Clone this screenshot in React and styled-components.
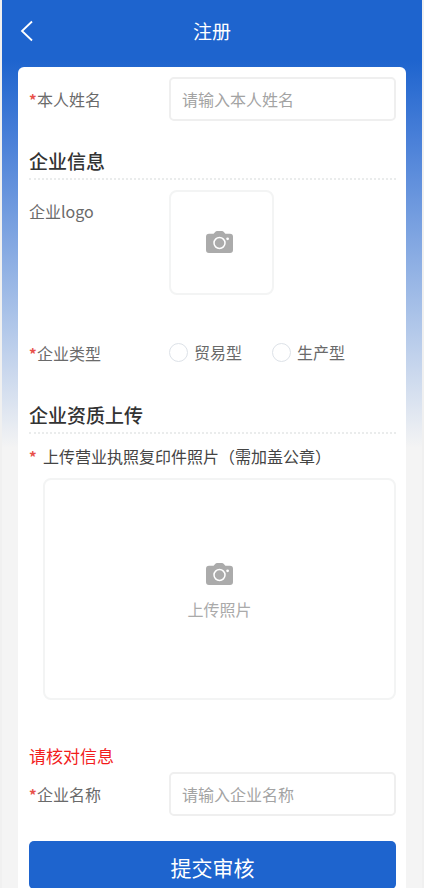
import React, { useState } from 'react';
import styled, { createGlobalStyle, css } from 'styled-components';

const GlobalStyle = createGlobalStyle`
  * {
    box-sizing: border-box;
  }
  body {
    margin: 0;
    background-color: #f0f0f0;
    font-family: 'Noto Sans CJK SC', 'Noto Sans', sans-serif;
  }
  button,
  input {
    font-family: inherit;
  }
`;

const Page = styled.div`
  min-height: 100vh;
  margin: 0 2px;
  padding: 0 16px;
  background: #f4f4f4
    linear-gradient(#1e64ce 60px, #4a80d8 140px, #a2bde7 300px, #f4f4f4 448px)
    no-repeat;
`;

const Header = styled.header`
  display: grid;
  grid-template-columns: 24px 1fr 24px;
  align-items: center;
  height: 67px;
  padding-bottom: 6px;
`;

const BackButton = styled.button`
  display: flex;
  padding: 0 0 0 2px;
  border: none;
  background: none;
  color: white;
`;

const Title = styled.h1`
  margin: 0;
  font-size: 19px;
  font-weight: 400;
  line-height: 28px;
  text-align: center;
  color: white;
`;

const Card = styled.form`
  display: flex;
  flex-direction: column;
  padding: 10px 10px 0 11px;
  border-radius: 6px 6px 0 0;
  background-color: white;
`;

const Row = styled.div`
  display: grid;
  grid-template-columns: 140px 1fr;
  align-items: center;
`;

const LogoRow = styled(Row)`
  align-items: start;
`;

const labelText = css`
  font-size: 16px;
  line-height: 24px;
  color: #6a6a6a;
`;

const Label = styled.label`
  ${labelText}
`;

const LogoLabel = styled(Label)`
  padding-top: 9px;
`;

const LabelText = styled.span`
  ${labelText}
`;

const Star = styled.span`
  display: inline-block;
  width: ${({ $wide }) => ($wide ? '14px' : '8px')};
  font-size: 15px;
  font-weight: 700;
  color: #e8504a;
`;

const TextInput = styled.input`
  width: 100%;
  height: 44px;
  padding: 0 11px;
  border: 2px solid #efefef;
  border-radius: 5px;
  background-color: white;
  font-size: 16px;
  color: #333;
  &::placeholder {
    color: #a3a3a3;
    opacity: 1;
  }
`;

const SectionTitle = styled.h2`
  margin: ${({ $spaced }) => ($spaced ? '35px' : '26px')} 0 10px;
  padding-bottom: 3px;
  border-bottom: 2px dotted #eaecec;
  font-size: 19px;
  font-weight: 500;
  line-height: 28px;
  color: #333;
`;

const UploadBox = styled.label`
  position: relative;
  display: flex;
  flex-direction: column;
  align-items: center;
  justify-content: center;
  gap: 12px;
  border: 2px solid #f3f4f4;
  border-radius: 8px;
  font-size: 16px;
  line-height: 24px;
  color: #aaa;
  cursor: pointer;
  ${({ $large }) =>
    $large
      ? css`
          height: 222px;
          margin-left: 14px;
          padding-top: 6px;
        `
      : css`
          width: 105px;
          height: 105px;
          padding: 0 5px 2px 0;
        `}
`;

const FileInput = styled.input`
  position: absolute;
  width: 1px;
  height: 1px;
  opacity: 0;
`;

const TypeRow = styled(Row)`
  margin-top: 45px;
`;

const RadioGroup = styled.div`
  display: flex;
  gap: 30px;
  padding-bottom: 2px;
`;

const RadioLabel = styled.label`
  display: flex;
  align-items: center;
  gap: 6px;
  ${labelText}
`;

const Radio = styled.input`
  appearance: none;
  width: 19px;
  height: 19px;
  margin: 0;
  border: 1px solid #dde2e8;
  border-radius: 50%;
  background-color: white;
  &:checked {
    border: 6px solid #1e64ce;
  }
`;

const UploadCaption = styled.p`
  margin: 0 0 9px;
  font-size: 16px;
  line-height: 24px;
  color: #444;
`;

const Notice = styled.p`
  margin: 44px 0 4px;
  font-size: 17px;
  line-height: 24px;
  color: #f21d1d;
`;

const SubmitButton = styled.button`
  height: 48px;
  margin-top: 25px;
  padding: 4px 0 0;
  border: none;
  border-radius: 5px;
  background-color: #1e64ce;
  font-size: 21px;
  line-height: 30px;
  color: white;
`;

const BackIcon = () => (
  <svg width="14" height="22" viewBox="0 0 14 22" fill="none">
    <path d="M12 1.500L2 11l10 9.500" stroke="currentColor" strokeWidth="1.800" />
  </svg>
);

const CameraIcon = () => (
  <svg width="27" height="22" viewBox="0 0 27 22">
    <path
      d="M3 2.800h4.600L9.400.8Q10 0 11 0h5q1 0 1.600.8l1.800 2H24a3 3 0 0 1 3 3V19a3 3 0 0 1-3 3H3a3 3 0 0 1-3-3V5.800a3 3 0 0 1 3-3z"
      fill="#ababab"
    />
    <circle cx="13.500" cy="12" r="5.500" fill="none" stroke="white" strokeWidth="1.500" />
    <circle cx="21.600" cy="7.800" r="1.400" fill="white" />
  </svg>
);

const COMPANY_TYPES = [
  { value: 'trade', label: '贸易型' },
  { value: 'production', label: '生产型' },
];

const App = () => {
  const [form, setForm] = useState({ name: '', type: '', company: '' });

  const updateForm = (element) => {
    const { name, value } = element.target;
    setForm({ ...form, [name]: value });
  };

  return (
    <>
      <GlobalStyle />
      <Page>
        <Header>
          <BackButton type="button" aria-label="返回">
            <BackIcon />
          </BackButton>
          <Title>注册</Title>
        </Header>
        <Card onSubmit={(e) => e.preventDefault()}>
          <Row>
            <Label htmlFor="name">
              <Star>*</Star>本人姓名
            </Label>
            <TextInput
              id="name"
              name="name"
              placeholder="请输入本人姓名"
              value={form.name}
              onChange={updateForm}
            />
          </Row>

          <SectionTitle>企业信息</SectionTitle>
          <LogoRow>
            <LogoLabel htmlFor="logo">企业logo</LogoLabel>
            <UploadBox>
              <CameraIcon />
              <FileInput id="logo" type="file" accept="image/*" />
            </UploadBox>
          </LogoRow>
          <TypeRow role="radiogroup" aria-labelledby="type-label">
            <LabelText id="type-label">
              <Star>*</Star>企业类型
            </LabelText>
            <RadioGroup>
              {COMPANY_TYPES.map(({ value, label }) => (
                <RadioLabel key={value}>
                  <Radio
                    type="radio"
                    name="type"
                    value={value}
                    checked={form.type === value}
                    onChange={updateForm}
                  />
                  {label}
                </RadioLabel>
              ))}
            </RadioGroup>
          </TypeRow>

          <SectionTitle $spaced>企业资质上传</SectionTitle>
          <UploadCaption>
            <Star $wide>*</Star>上传营业执照复印件照片（需加盖公章）
          </UploadCaption>
          <UploadBox $large>
            <CameraIcon />
            上传照片
            <FileInput type="file" accept="image/*" />
          </UploadBox>

          <Notice>请核对信息</Notice>
          <Row>
            <Label htmlFor="company">
              <Star>*</Star>企业名称
            </Label>
            <TextInput
              id="company"
              name="company"
              placeholder="请输入企业名称"
              value={form.company}
              onChange={updateForm}
            />
          </Row>
          <SubmitButton type="submit">提交审核</SubmitButton>
        </Card>
      </Page>
    </>
  );
};

export default App;
